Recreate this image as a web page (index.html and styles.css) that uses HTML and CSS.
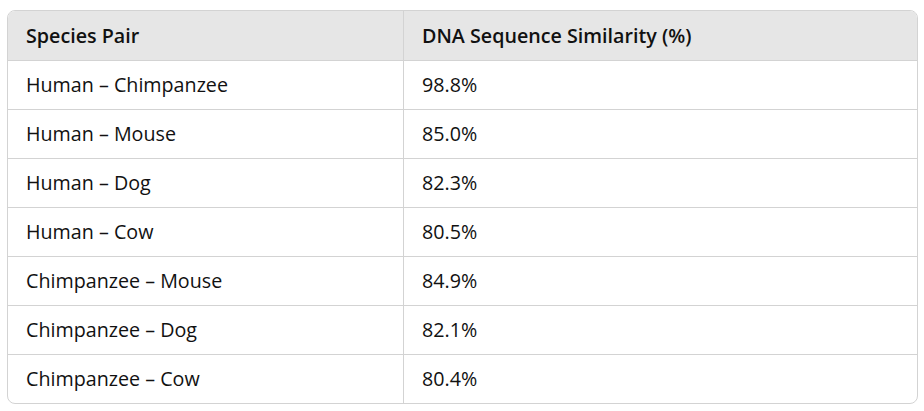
FILE: index.html
```html
<!DOCTYPE html>
<html lang="en">
<head>
<meta charset="utf-8">
<title>Species DNA similarity</title>
<link rel="stylesheet" href="styles.css">
</head>
<body>
<div class="wrap">
  <table class="data">
    <thead>
      <tr><th class="c1">Species Pair</th><th>DNA Sequence Similarity (%)</th></tr>
    </thead>
    <tbody>
      <tr><td class="c1">Human – Chimpanzee</td><td>98.8%</td></tr>
      <tr><td class="c1">Human – Mouse</td><td>85.0%</td></tr>
      <tr><td class="c1">Human – Dog</td><td>82.3%</td></tr>
      <tr><td class="c1">Human – Cow</td><td>80.5%</td></tr>
      <tr><td class="c1">Chimpanzee – Mouse</td><td>84.9%</td></tr>
      <tr><td class="c1">Chimpanzee – Dog</td><td>82.1%</td></tr>
      <tr><td class="c1">Chimpanzee – Cow</td><td>80.4%</td></tr>
    </tbody>
  </table>
</div>
</body>
</html>
```
FILE: styles.css
```css
html, body {
  margin: 0;
  padding: 0;
  background: #ffffff;
}
.wrap {
  padding: 10px 6px 0 7px;
}
.data {
  width: 100%;
  border-collapse: separate;
  border-spacing: 0;
  border: 1px solid #d3d3d3;
  border-radius: 8px;
  overflow: hidden;
  font-family: "Open Sans", "Noto Sans", sans-serif;
  font-size: 19.7px;
  line-height: 1.3;
  color: #111111;
  table-layout: fixed;
}
.data th, .data td {
  text-align: left;
  padding: 0 0 0 18px;
  vertical-align: middle;
}
.data th {
  background: #e6e6e6;
  font-weight: 600;
  height: 49px;
  border-bottom: 1px solid #d3d3d3;
}
.data td {
  height: 48px;
  border-bottom: 1px solid #d3d3d3;
}
.data tbody tr:last-child td {
  border-bottom: none;
}
.data .c1 {
  width: 377px;
  border-right: 1px solid #d3d3d3;
}
```
